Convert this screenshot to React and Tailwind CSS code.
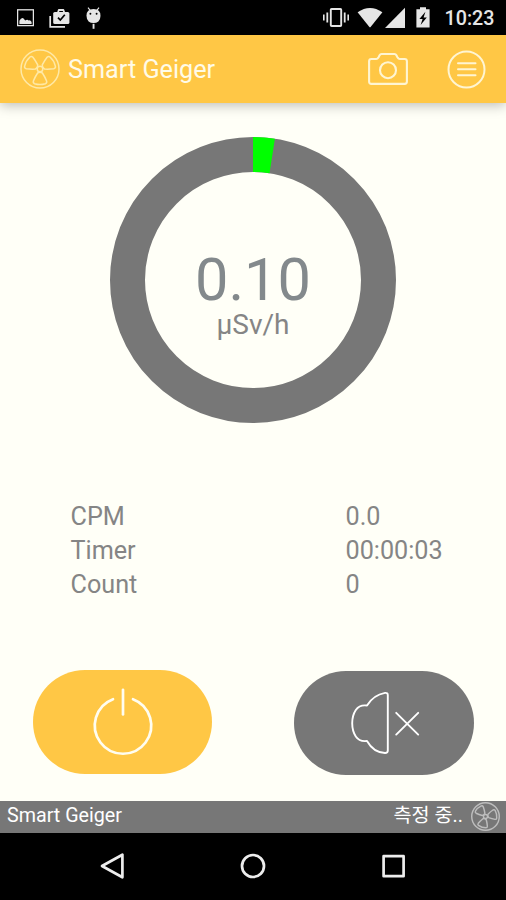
const FAN_ANGLES = [0, 120, 240];

const readings = [
    { label: "CPM", value: "0.0" },
    { label: "Timer", value: "00:00:03" },
    { label: "Count", value: "0" },
];

function FanIcon({ className, rotate = 0, strokeWidth = 1.5 }) {
    return (
        <svg viewBox="-20 -20 40 40" className={className} fill="none" stroke="currentColor" strokeWidth={strokeWidth}>
            <circle r="19" />
            <circle r="2.8" />
            {FAN_ANGLES.map((angle) => (
                <path
                    key={angle}
                    transform={`rotate(${angle + rotate})`}
                    d="M-2.4 4 Q0 2.6 2.4 4 Q5 8 6.6 12 Q7.2 14 5.4 14.7 Q0 16.4 -5.4 14.7 Q-7.2 14 -6.6 12 Q-5 8 -2.4 4Z"
                    strokeLinejoin="round"
                />
            ))}
        </svg>
    );
}

function StatusBar() {
    return (
        <div className="flex h-[35px] items-start bg-black pl-[17px] pr-[11.5px] pt-[6px] text-[#e6e6e6]">
            {/* picture */}
            <svg width="17" height="23" viewBox="0 0 17 23" fill="none">
                <rect x="0.6" y="3.8" width="15.8" height="15.8" stroke="currentColor" strokeWidth="1.3" />
                <path d="M2.4 18V14.8Q4.4 11 6.6 12.4L8.2 14.6Q10.2 12.8 11.6 14.4Q13.6 13.8 14.6 16V18Z" fill="currentColor" />
            </svg>
            {/* updated apps */}
            <svg className="ml-[15px]" width="21" height="23" viewBox="0 0 21 23" fill="none">
                <path d="M1.2 10V20.8H16" stroke="currentColor" strokeWidth="1.7" />
                <path d="M9 6.5L9.8 4H14.4L15.2 6.5" stroke="currentColor" strokeWidth="1.8" strokeLinejoin="round" />
                <path d="M5.8 6H18.8Q20.4 6 20.4 7.6V16.4Q20.4 18 18.8 18H5.8Q4.2 18 4.2 16.4V7.6Q4.2 6 5.8 6Z" fill="currentColor" />
                <path d="M9 11.6L11.3 14L15.8 8.8" stroke="#000" strokeWidth="1.7" />
            </svg>
            {/* debugging robot */}
            <svg className="ml-[15.5px]" width="15" height="23" viewBox="0 0 15 23" fill="none">
                <path d="M2 1.6L4.2 4.4M13 1.6L10.8 4.4" stroke="currentColor" strokeWidth="1.1" />
                <path d="M0.5 9.8Q0.5 3 7.5 3Q14.5 3 14.5 9.8Q14.5 13.4 12.4 15.4Q10.4 17 7.5 17Q4.6 17 2.6 15.4Q0.5 13.4 0.5 9.8Z" fill="currentColor" />
                <rect x="6.6" y="17.8" width="1.9" height="5" fill="currentColor" />
                <circle cx="4.4" cy="7.8" r="0.95" fill="#000" />
                <circle cx="10.6" cy="7.8" r="0.95" fill="#000" />
            </svg>
            <div className="grow" />
            {/* vibrate */}
            <svg width="26" height="23" viewBox="0 0 26 23" fill="none" stroke="currentColor">
                <rect x="7.8" y="3" width="10.4" height="17" rx="0.8" strokeWidth="1.9" />
                <path d="M0.8 8.5V14.5M25.2 8.5V14.5" strokeWidth="1.6" />
                <path d="M4.3 6.5V16.5M21.7 6.5V16.5" strokeWidth="1.8" />
            </svg>
            {/* wifi */}
            <svg className="ml-[8px]" width="26" height="23" viewBox="0 0 26 23">
                <path d="M0.6 6.2Q13 -2.4 25.4 6.2L13.8 20.8Q13 21.8 12.2 20.8Z" fill="currentColor" />
            </svg>
            {/* signal */}
            <svg className="ml-[2px]" width="20" height="23" viewBox="0 0 20 23">
                <path d="M20 1.8V22H0Z" fill="currentColor" />
            </svg>
            {/* charging battery */}
            <svg className="ml-[11px]" width="14" height="23" viewBox="0 0 14 23">
                <path d="M4 1.2H10V3.3H13.6V21.5H0.4V3.3H4Z" fill="currentColor" />
                <path d="M9.4 5.8L3.4 13H6.6L4.6 19L10.8 11.4H7.6Z" fill="#000" />
            </svg>
            <span className="ml-[14.5px] text-[19.7px] font-medium leading-[26px]">10:23</span>
        </div>
    );
}

function Header() {
    return (
        <header className="relative flex h-[67.5px] items-center bg-[#ffc745] pl-5 pr-5 text-[#fffbe8] shadow-[0_2px_12px_rgba(0,0,0,0.28)]">
            <FanIcon className="size-10 text-[#ffe9a6]" />
            <h1 className="ml-[8px] pt-[3px] text-[25.2px] leading-[30px]">Smart Geiger</h1>
            <div className="grow" />
            <svg className="mt-[1px]" width="40" height="34" viewBox="0 0 40 34" fill="none" stroke="#fff5d2" strokeWidth="2.1" strokeLinejoin="round">
                <path d="M3.4 7H8.2Q9.6 7 10.4 5.6L11.6 3.2Q12.2 2 13.6 2H26.4Q27.8 2 28.4 3.2L29.6 5.6Q30.4 7 31.8 7H36.6Q38.9 7 38.9 9.3V29.6Q38.9 31.9 36.6 31.9H3.4Q1.1 31.9 1.1 29.6V9.3Q1.1 7 3.4 7Z" />
                <circle cx="20" cy="18.2" r="8" />
            </svg>
            <svg className="ml-[39px] mt-[1px]" width="39" height="39" viewBox="0 0 39 39" fill="none" stroke="#fff5d2" strokeWidth="2" strokeLinecap="round">
                <circle cx="19.5" cy="19.5" r="18" />
                <path d="M11 13.3H28.5M11 19.3H28.5M11 25.3H28.5" />
            </svg>
        </header>
    );
}

function Gauge({ value, unit }) {
    return (
        <div className="grid size-[286px] place-items-center">
            <svg viewBox="-143 -143 286 286" className="col-start-1 row-start-1 size-full" fill="none" strokeWidth="35">
                <circle r="125.5" stroke="#777777" />
                <path d="M0 -125.5A125.5 125.5 0 0 1 19.2 -124.02" stroke="#00ff00" />
            </svg>
            <div className="col-start-1 row-start-1 flex flex-col items-center pt-[32px] text-[#83898c]">
                <span className="text-[59.5px] leading-[60px]">{value}</span>
                <span className="-mt-px text-[28px] leading-[32px] text-[#858585]">{unit}</span>
            </div>
        </div>
    );
}

export default function App() {
    return (
        <div className="flex h-[900px] w-[506px] flex-col overflow-hidden bg-[#fffff7] font-[Roboto,'Noto_Sans_CJK_KR',sans-serif]">
            <StatusBar />
            <Header />
            <main className="flex grow flex-col">
                <div className="flex justify-center pt-[34px]">
                    <Gauge value="0.10" unit="µSv/h" />
                </div>

                <div className="mt-[77px] pl-[70.5px] text-[25.2px] leading-[34.2px] text-[#858585]">
                    {readings.map((item) => (
                        <div key={item.label} className="flex">
                            <span className="w-[275px]">{item.label}</span>
                            <span>{item.value}</span>
                        </div>
                    ))}
                </div>

                <div className="mt-[67.9px] flex justify-between pl-[32.5px] pr-[32.5px]">
                    <button type="button" className="h-[103.5px] w-[179.5px] rounded-full bg-[#ffc745]">
                        <svg viewBox="0 0 179.5 103.5" className="size-full" fill="none" stroke="#fffdf0" strokeWidth="2.7" strokeLinecap="round">
                            <path d="M80 29.2A28.2 28.2 0 1 0 100 29.2" />
                            <path d="M90 19.8V44.5" />
                        </svg>
                    </button>
                    <button type="button" className="mt-px h-[103.5px] w-[179.5px] rounded-full bg-[#777777]">
                        <svg viewBox="0 0 179.5 103.5" className="size-full" fill="none" stroke="#ffffff" strokeWidth="1.9" strokeLinecap="round" strokeLinejoin="round">
                            <path d="M73 34.5Q79.5 24 91 21.9Q93.8 21.6 93.8 24.2V79.5Q93.8 82 91 82Q79.5 81.5 73 70Q65.5 71 61.8 65.5Q58.2 60 58.2 52.3Q58.2 44.5 61.8 39Q65.5 33.5 73 34.5Z" />
                            <path d="M102.2 41.8L124.2 63.6M124.2 41.8L102.2 63.6" />
                        </svg>
                    </button>
                </div>
            </main>
            <footer className="flex h-[32px] items-start bg-[#777777] pl-[7px] pr-[6px] text-[19.7px] leading-[30px] text-white">
                <span>Smart Geiger</span>
                <div className="grow" />
                <span>측정 중..</span>
                <FanIcon className="ml-[8px] mt-[1.5px] size-[29px] text-[#bdbdbd]" rotate={18} strokeWidth={2} />
            </footer>
            <nav className="flex h-[67.5px] items-center justify-center gap-[114px] bg-black text-[#ededed]">
                <svg width="26" height="28" viewBox="0 0 26 28" fill="none" stroke="currentColor" strokeWidth="2.7" strokeLinejoin="round">
                    <path d="M22.4 2.7V25.3L2 14Z" />
                </svg>
                <svg width="26" height="28" viewBox="0 0 26 28" fill="none" stroke="currentColor" strokeWidth="2.7">
                    <circle cx="13" cy="14" r="11" />
                </svg>
                <svg width="26" height="28" viewBox="0 0 26 28" fill="none" stroke="currentColor" strokeWidth="2.7" strokeLinejoin="round">
                    <rect x="3.6" y="4.2" width="20" height="20" />
                </svg>
            </nav>
        </div>
    );
}
